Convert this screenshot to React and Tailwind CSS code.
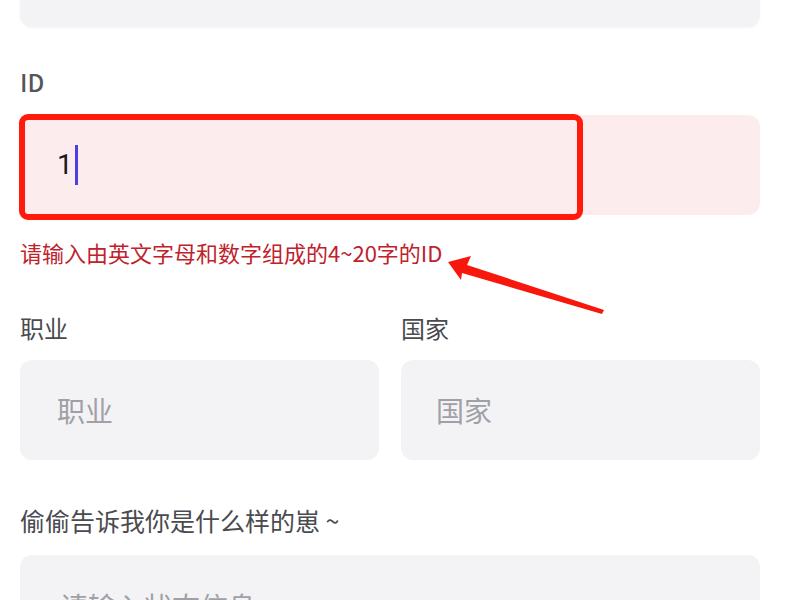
import React from "react";

const font = { fontFamily: '"Noto Sans CJK SC", "Noto Sans", sans-serif' };

export default function App() {
  return (
    <div className="relative w-[800px] h-[600px] overflow-hidden bg-white" style={font}>
      <div className="pl-5 pr-10">
        <div className="-mt-[73px] h-[100px] rounded-xl bg-[#f3f3f5] shadow-[0_1px_3px_rgba(0,0,0,0.04)]" />

        <div className="mt-[39px] h-8 text-[24px] leading-8 font-medium text-[#55555a]">ID</div>

        <div className="mt-[17px] h-[100px] rounded-xl bg-[#fdecee] flex items-center pl-[37px]">
          <span className="text-[28px] leading-9 text-[#1a1a1a]" style={{ fontFamily: 'Roboto, sans-serif', fontWeight: 400 }}>1</span>
          <span className="ml-[2px] w-[3px] h-[40px] bg-[#4b3fe0]" />
        </div>

        <div className="mt-[23px] h-7 text-[22px] leading-7 text-[#c0222c]">
          请输入由英文字母和数字组成的4~20字的ID
        </div>

        <div className="mt-[46px] grid grid-cols-2 gap-[22px]">
          <div>
            <div className="h-8 text-[24px] leading-8 text-[#4a4a4f]">职业</div>
            <div className="mt-4 h-[100px] rounded-xl bg-[#f3f3f5] flex items-center pl-[37px] text-[28px] text-[#a0a0a6]">
              职业
            </div>
          </div>
          <div>
            <div className="h-8 text-[24px] leading-8 text-[#4a4a4f]">国家</div>
            <div className="mt-4 h-[100px] rounded-xl bg-[#f3f3f5] flex items-center pl-[35px] text-[28px] text-[#a0a0a6]">
              国家
            </div>
          </div>
        </div>

        <div className="mt-[44px] h-8 text-[25px] leading-8 text-[#4a4a4f]">偷偷告诉我你是什么样的崽 ~</div>

        <div className="mt-[19px] h-[120px] rounded-xl bg-[#f3f3f5] pt-[33px] pl-[40px] text-[28px] leading-9 text-[#a0a0a6]">
          请输入状态信息
        </div>
      </div>

      {/* red annotation rectangle */}
      <div className="absolute left-[19px] top-[114px] w-[564px] h-[106px] rounded-[9px] border-[6px] border-[#ff1a0c] pointer-events-none" />

      {/* red annotation arrow */}
      <svg className="absolute left-0 top-0 pointer-events-none" width="800" height="600" viewBox="0 0 800 600">
        <polygon
          points="448,262 471,256 467,265 604,310 602,314 462,273 461,280"
          fill="#f7170d"
        />
      </svg>
    </div>
  );
}
